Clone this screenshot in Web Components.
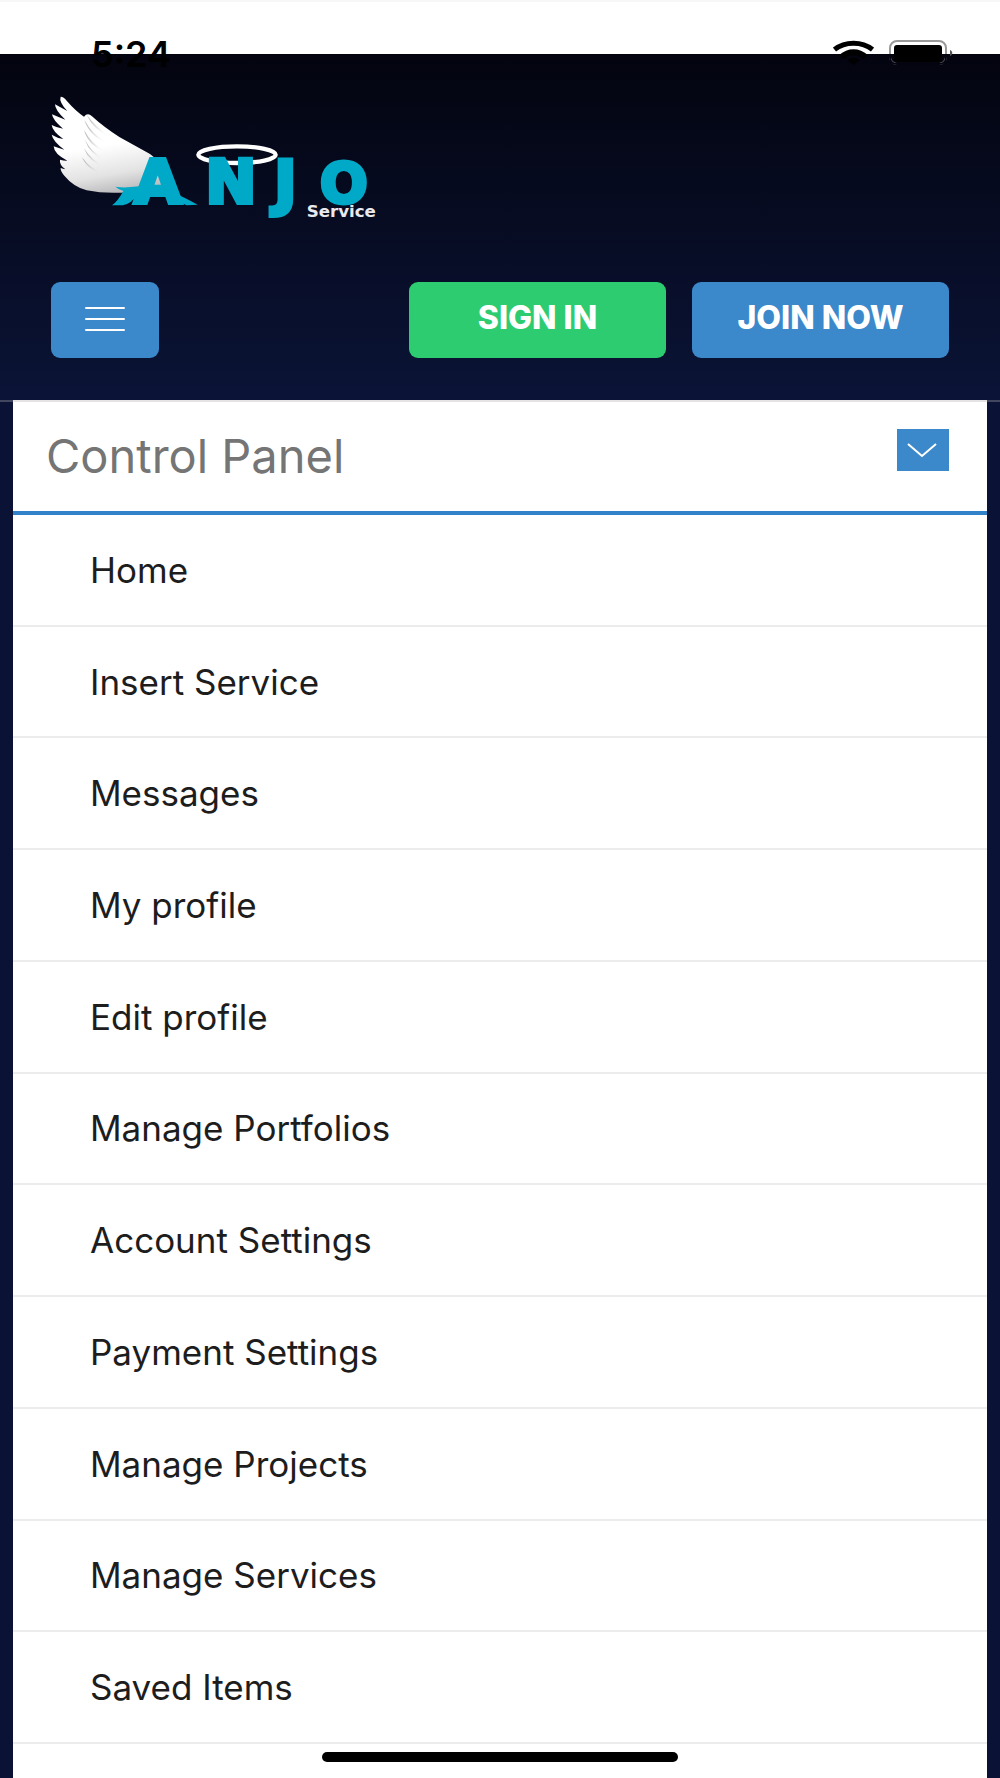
<!DOCTYPE html>
<html lang="en">
<head>
<meta charset="utf-8">
<meta name="viewport" content="width=device-width, initial-scale=1">
<title>Anjo Service</title>
<style>
body {
  margin: 0;
  font-family: Inter, "Open Sans", sans-serif;
  background: #0a1335;
}
</style>
</head>
<body>
<anjo-app>
  <status-bar slot="status" time="5:24"></status-bar>
  <site-header slot="header">
    <anjo-logo slot="logo"></anjo-logo>
    <action-button slot="actions" color="#2ecc71">SIGN IN</action-button>
    <action-button slot="actions">JOIN NOW</action-button>
  </site-header>
  <control-panel>
    <span slot="title">Control Panel</span>
    <menu-item>Home</menu-item>
    <menu-item>Insert Service</menu-item>
    <menu-item>Messages</menu-item>
    <menu-item>My profile</menu-item>
    <menu-item>Edit profile</menu-item>
    <menu-item>Manage Portfolios</menu-item>
    <menu-item>Account Settings</menu-item>
    <menu-item>Payment Settings</menu-item>
    <menu-item>Manage Projects</menu-item>
    <menu-item>Manage Services</menu-item>
    <menu-item>Saved Items</menu-item>
  </control-panel>
</anjo-app>

<script>
function makeTemplate(html) {
  const template = document.createElement('template');
  template.innerHTML = html;
  return template;
}

class BaseElement extends HTMLElement {
  constructor() {
    super();
    this.attachShadow({ mode: 'open' });
    this.shadowRoot.appendChild(this.constructor.template.content.cloneNode(true));
  }
}

class AnjoApp extends BaseElement {
  static template = makeTemplate(`
<style>
:host {
  display: flex;
  flex-direction: column;
  min-height: 100vh;
}
main {
  flex: 1;
  display: flex;
  padding: 0 13px;
}
/* sits over the page like the phone's own home bar */
.home-bar {
  position: fixed;
  bottom: 16px;
  left: 50%;
  width: 356px;
  height: 10px;
  transform: translateX(-50%);
  border-radius: 5px;
  background: #000;
}
</style>
<slot name="status"></slot>
<slot name="header"></slot>
<main><slot></slot></main>
<div class="home-bar"></div>
`);
}

class StatusBar extends BaseElement {
  static template = makeTemplate(`
<style>
/* the clock and icons hang over the top of the header */
:host {
  display: flex;
  justify-content: space-between;
  align-items: center;
  position: relative;
  z-index: 1;
  height: 72px;
  margin-bottom: -18px;
  padding: 0 47px 0 91px;
  box-sizing: border-box;
  background: linear-gradient(#f7f7f7 2px, #fff 2px, #fff 54px, transparent 54px);
}
time {
  padding-top: 36px;
  font-size: 36px;
  line-height: 36px;
  font-weight: 600;
  color: #000;
}
.icons {
  display: flex;
  gap: 15px;
  padding-top: 34px;
}
svg {
  display: block;
}
</style>
<time></time>
<div class="icons">
  <svg width="41" height="26" viewBox="0 0 41 26" aria-hidden="true">
    <path d="M1.500 9.500C12 1 29 1 39.500 9.500" fill="none" stroke="#000" stroke-width="5"/>
    <path d="M8.500 17c7-6.500 17-6.500 24 0" fill="none" stroke="#000" stroke-width="6"/>
    <path d="M14.500 20c3.500-3 8.500-3 12 0l-6 5z"/>
  </svg>
  <svg width="64" height="26" viewBox="0 0 64 26" aria-hidden="true">
    <rect x="1" y="1" width="56" height="23" rx="7" fill="none" stroke="#999" stroke-width="2"/>
    <path d="M1 14v3q0 7 7 7h42q7 0 7-7v-3" fill="none" stroke="#03040f" stroke-width="2"/>
    <rect x="5" y="5" width="48" height="17" rx="3"/>
    <path d="M61 10c3 1 3 5 0 6z" fill="#555"/>
  </svg>
</div>
`);

  connectedCallback() {
    this.shadowRoot.querySelector('time').textContent = this.getAttribute('time');
  }
}

class SiteHeader extends BaseElement {
  static template = makeTemplate(`
<style>
:host {
  display: block;
  padding: 42px 51px;
  border-bottom: 2px solid #42475f;
  background: linear-gradient(#03040f, #0b1437);
}
nav {
  display: flex;
  gap: 26px;
  margin-top: 62px;
}
.menu {
  width: 108px;
  height: 76px;
  margin: 0 auto 0 0;
  padding: 0;
  border: 0;
  border-radius: 9px;
  background: #3b88cb;
  display: flex;
  align-items: center;
  justify-content: center;
  cursor: pointer;
}
</style>
<slot name="logo"></slot>
<nav>
  <button class="menu" type="button" aria-label="Menu">
    <svg width="42" height="26" viewBox="0 0 42 26" stroke="#fff" stroke-width="2" stroke-linecap="round">
      <path d="M2 1h38M2 12h38M2 23h38"/>
    </svg>
  </button>
  <slot name="actions"></slot>
</nav>
`);
}

class AnjoLogo extends BaseElement {
  static template = makeTemplate(`
<style>
:host {
  display: block;
}
svg {
  display: block;
}
.name {
  font: bold 184px "DejaVu Sans", sans-serif;
  fill: #00a9c7;
  stroke: #00a9c7;
  stroke-width: 12px;
}
.round {
  font-size: 168px;
}
.sub {
  font: bold 50px "DejaVu Sans", sans-serif;
  fill: #e9e9ef;
}
</style>
<svg width="332" height="124" viewBox="63 48 996 372">
  <defs>
    <linearGradient id="wing" x1="0.400" y1="0" x2="0.600" y2="1">
      <stop offset="0.500" stop-color="#fff"/>
      <stop offset="0.800" stop-color="#e4e3e4"/>
      <stop offset="1" stop-color="#b9b8ba"/>
    </linearGradient>
    <linearGradient id="shade">
      <stop offset="0" stop-color="#aaa6a4"/>
      <stop offset="1" stop-color="#fff" stop-opacity="0"/>
    </linearGradient>
  </defs>
  <path fill="url(#wing)" d="M92 50Q101 50 110 62Q136 92 162 110Q173 96 186 109Q222 142 268 171L360 222Q378 234 388 250L405 330Q345 334 300 336Q230 343 170 331Q130 320 103 287Q91 274 92 264Q99 266 106 268Q87 253 90 239Q103 243 112 242Q72 222 71 199Q86 205 103 209Q69 184 65 164Q83 175 100 177Q67 154 65 135Q80 143 99 146Q68 120 66 103Q84 111 106 119Q75 91 75 73Q91 82 112 93Q86 65 92 50Z"/>
  <g fill="url(#shade)">
    <path d="M170 104q28 38 68 64q-47-18-68-64z"/>
    <path d="M163 120q25 46 70 69q-52-17-70-69z"/>
    <path d="M162 150q22 42 65 65q-50-15-65-65z"/>
    <path d="M165 180q20 38 60 59q-45-14-60-59z"/>
    <path d="M162 205q22 36 62 55q-46-12-62-55z"/>
    <path d="M156 232q24 34 66 49q-48-8-66-49z"/>
  </g>
  <ellipse cx="621" cy="224" rx="116" ry="25" fill="none" stroke="#fff" stroke-width="13"/>
  <text class="name" y="369"><tspan x="312">A</tspan><tspan x="526">N</tspan><tspan x="732">J</tspan><tspan class="round" x="870" y="367">O</tspan></text>
  <path fill="#00a9c7" d="M256 320C310 329 344 307 390 322Q436 338 503 374L470 376C415 350 370 334 326 340Q302 374 278 376H246Q264 363 280 333Q265 328 256 320Z"/>
  <text class="sub" x="830" y="412">Service</text>
</svg>
`);
}

class ActionButton extends BaseElement {
  static template = makeTemplate(`
<style>
:host {
  display: block;
  width: 257px;
}
button {
  width: 100%;
  height: 76px;
  padding: 0 0 4px;
  border: 0;
  border-radius: 9px;
  background: var(--button-color, #3b88cb);
  color: #fff;
  font: 800 32px/40px Inter, sans-serif;
  cursor: pointer;
}
</style>
<button type="button"><slot></slot></button>
`);

  connectedCallback() {
    if (this.getAttribute('color')) {
      this.style.setProperty('--button-color', this.getAttribute('color'));
    }
  }
}

class ControlPanel extends BaseElement {
  static template = makeTemplate(`
<style>
/* overlaps the header's bottom border by its own */
:host {
  flex: 1;
  display: flex;
  flex-direction: column;
  margin-top: -2px;
  border-top: 2px solid #e6e3e4;
  background: #fff;
}
header {
  display: flex;
  justify-content: space-between;
  align-items: flex-start;
  padding: 27px 38px 28px 33px;
  border-bottom: 4px solid #3182c8;
}
h1 {
  margin: 0;
  font-size: 47px;
  line-height: 54px;
  font-weight: 400;
  color: #757575;
}
button {
  width: 52px;
  height: 42px;
  padding: 0;
  border: 0;
  background: #3b88cb;
  cursor: pointer;
}
svg {
  display: block;
  margin: 0 auto;
}
/* rows share the height; the end shows the start of the next row */
nav {
  flex: 1;
  display: grid;
  grid-auto-rows: 1fr;
  padding-bottom: 34px;
}
</style>
<header>
  <h1><slot name="title"></slot></h1>
  <button type="button" aria-label="Toggle control panel">
    <svg width="32" height="16" viewBox="0 0 32 16" fill="none" stroke="#fff" stroke-width="2">
      <path d="M1 2l14 12L29 2"/>
    </svg>
  </button>
</header>
<nav><slot></slot></nav>
`);

  connectedCallback() {
    this.shadowRoot.querySelector('button').addEventListener('click', () => {
      const nav = this.shadowRoot.querySelector('nav');
      nav.style.display = nav.style.display === 'none' ? '' : 'none';
    });
  }
}

class MenuItem extends BaseElement {
  static template = makeTemplate(`
<style>
:host {
  display: flex;
  border-bottom: 2px solid #ececec;
}
a {
  flex: 1;
  display: flex;
  align-items: center;
  padding: 24px 77px;
  color: #1d1d1d;
  font-size: 35px;
  line-height: 48px;
  text-decoration: none;
}
</style>
<a href="#"><slot></slot></a>
`);
}

window.customElements.define('anjo-app', AnjoApp);
window.customElements.define('status-bar', StatusBar);
window.customElements.define('site-header', SiteHeader);
window.customElements.define('anjo-logo', AnjoLogo);
window.customElements.define('action-button', ActionButton);
window.customElements.define('control-panel', ControlPanel);
window.customElements.define('menu-item', MenuItem);
</script>
</body>
</html>
